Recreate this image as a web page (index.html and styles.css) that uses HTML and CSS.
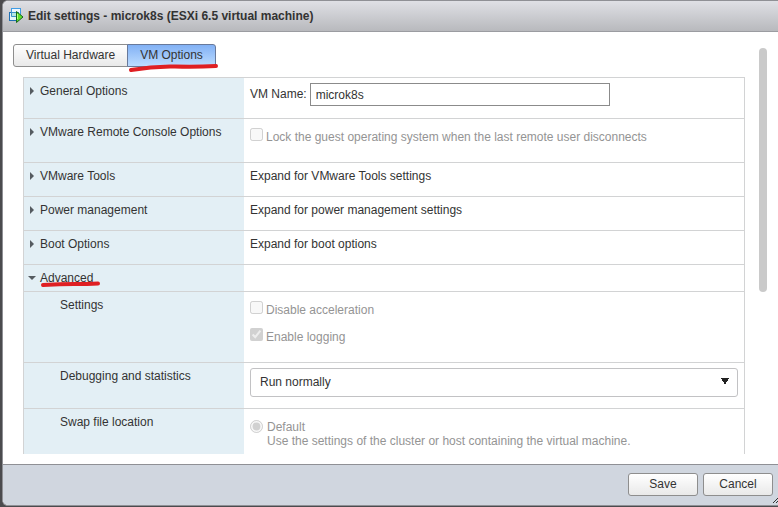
FILE: index.html
```html
<!DOCTYPE html>
<html lang="en">
<head>
<meta charset="utf-8">
<title>Edit settings - microk8s</title>
<link rel="stylesheet" href="styles.css">
</head>
<body>
<div class="dialog" role="dialog" aria-labelledby="dialog-title">
  <header class="titlebar">
    <svg class="vm-icon" width="16" height="16" viewBox="0 0 16 16" aria-hidden="true">
      <rect x="3.500" y="0.500" width="9" height="8" fill="#eef6ff" stroke="#3f9ce4"/>
      <rect x="1.500" y="4.500" width="9" height="8" fill="#e4f6fa" stroke="#2070b4"/>
      <path d="M3.500 4.500h7v4h-7z" fill="#b5e6e4" stroke="#3a94c8"/>
      <path d="M8.500 3.500v11L15 9z" fill="#5fe02c" stroke="#17651b" stroke-linejoin="round"/>
      <path d="M9.500 6v5" stroke="#bafc8c"/>
    </svg>
    <h1 id="dialog-title">Edit settings - microk8s (ESXi 6.5 virtual machine)</h1>
  </header>

  <main class="body">
    <div class="content">
      <div class="tabs" role="tablist">
        <button class="tab" type="button" role="tab" aria-selected="false">Virtual Hardware</button>
        <button class="tab tab-active" type="button" role="tab" aria-selected="true">VM Options
          <svg class="mark mark-tab" width="90" height="8" viewBox="0 0 90 8" aria-hidden="true"><path d="M2 6Q24 2 46 2.500T87 2" fill="none" stroke="#df1f23" stroke-width="4" stroke-linecap="round"/></svg>
        </button>
      </div>

      <div class="settings">
        <section class="row row-general">
          <div class="name"><button class="expander" type="button">General Options</button></div>
          <div class="value value-field">
            <label for="vm-name">VM Name:</label>
            <input class="text-box" id="vm-name" type="text" value="microk8s">
          </div>
        </section>
        <section class="row row-console">
          <div class="name"><button class="expander" type="button">VMware Remote Console Options</button></div>
          <div class="value"><label class="choice"><input type="checkbox" disabled><span>Lock the guest operating system when the last remote user disconnects</span></label></div>
        </section>
        <section class="row">
          <div class="name"><button class="expander" type="button">VMware Tools</button></div>
          <div class="value">Expand for VMware Tools settings</div>
        </section>
        <section class="row">
          <div class="name"><button class="expander" type="button">Power management</button></div>
          <div class="value">Expand for power management settings</div>
        </section>
        <section class="row">
          <div class="name"><button class="expander" type="button">Boot Options</button></div>
          <div class="value">Expand for boot options</div>
        </section>
        <section class="row row-advanced">
          <div class="name"><button class="expander expander-open" type="button" aria-expanded="true">Advanced
            <svg class="mark mark-advanced" width="62" height="6" viewBox="0 0 62 6" aria-hidden="true"><path d="M3 4Q20 3 34 3T58 2.500" fill="none" stroke="#df1f23" stroke-width="4" stroke-linecap="round"/></svg>
          </button></div>
          <div class="value"></div>
        </section>
        <section class="row row-settings">
          <div class="name name-sub">Settings</div>
          <div class="value choices">
            <label class="choice"><input type="checkbox" disabled><span>Disable acceleration</span></label>
            <label class="choice"><input type="checkbox" checked disabled><span>Enable logging</span></label>
          </div>
        </section>
        <section class="row row-debug">
          <div class="name name-sub"><label for="debugging">Debugging and statistics</label></div>
          <div class="value value-select">
            <select class="select" id="debugging"><option>Run normally</option></select>
          </div>
        </section>
        <section class="row row-swap">
          <div class="name name-sub">Swap file location</div>
          <div class="value">
            <label class="choice choice-radio"><input type="radio" name="swap" checked disabled><span>Default<br>Use the settings of the cluster or host containing the virtual machine.</span></label>
          </div>
        </section>
      </div>
    </div>
    <div class="scroll-track"><div class="scroll-thumb"></div></div>
  </main>

  <footer class="actions">
    <button class="button" type="button">Save</button>
    <button class="button" type="button">Cancel</button>
    <svg class="grip" width="5" height="5" viewBox="0 0 5 5" aria-hidden="true"><path d="M0 5L5 0M3 5L5 3" stroke="#333" fill="none"/></svg>
  </footer>
</div>
</body>
</html>
```
FILE: styles.css
```css
* {
  box-sizing: border-box;
}

body {
  margin: 0;
  height: 100vh;
  padding: 0 0 1px 2px;
  background: #4b4b4e;
  color: #333;
  font: 12px/16px "Liberation Sans", Arial, sans-serif;
}

button,
input,
select {
  font: inherit;
  color: inherit;
}

.dialog {
  height: 100%;
  display: flex;
  flex-direction: column;
  overflow: hidden;
  background: #fff;
  border: solid #8f9095;
  border-width: 1px 0 1px 1px;
  border-radius: 6px 0 0 6px;
}

.titlebar {
  display: flex;
  align-items: center;
  flex: none;
  gap: 4px;
  height: 31px;
  padding: 0 5px;
  background: linear-gradient(#dfe0e5, #b8b9bd);
  border-bottom: 1px solid #9b9ca1;
}

h1 {
  margin: 0;
  font-size: 12px;
  line-height: 16px;
}

.body {
  display: flex;
  flex: 1;
  min-height: 0;
  padding: 12px 11px 10px 10px;
}

.content {
  display: flex;
  flex: 1;
  flex-direction: column;
  min-width: 0;
}

.tabs {
  display: flex;
  flex: none;
}

.tab {
  position: relative;
  height: 23px;
  padding: 0 12px 2px;
  border: 1px solid #8e8e8e;
  border-radius: 3px 0 0 3px;
  background: linear-gradient(#fff, #e9e9e9);
}

.tab-active {
  margin-left: -1px;
  border-radius: 0 3px 3px 0;
  border-color: #68799a;
  background: linear-gradient(#82b1f5, #bcdcff);
}

.mark {
  position: absolute;
  pointer-events: none;
}

.mark-tab {
  top: 19px;
  left: 1px;
}

.mark-advanced {
  top: 11px;
  left: 10px;
}

.settings {
  flex: 1;
  min-height: 0;
  margin: 10px 14px 0 10px;
  overflow: hidden;
  border: solid #d2d3d4;
  border-width: 1px 1px 0;
}

.row {
  display: grid;
  grid-template-columns: 220px 1fr;
  min-height: 34px;
  border-bottom: 1px solid #d2d3d4;
}

.name {
  padding: 5px 6px;
  background: #e3eff5;
}

.name-sub {
  padding-left: 36px;
}

.value {
  padding: 5px 6px;
}

.expander {
  position: relative;
  display: flex;
  align-items: center;
  gap: 6px;
  padding: 0;
  border: 0;
  background: none;
  white-space: nowrap;
}

.expander::before {
  content: "";
  border: solid transparent;
  border-width: 4px 0 4px 4px;
  border-left-color: #555b60;
}

.expander-open {
  gap: 4px;
}

.expander-open::before {
  margin-left: -2px;
  border-width: 4px 4px 0;
  border-color: #555b60 transparent transparent;
}

.row-general {
  min-height: 41px;
}

.row-console {
  min-height: 44px;
}

.row-console .value {
  padding-top: 9px;
}

.row-advanced {
  min-height: 27px;
}

.row-settings {
  min-height: 71px;
}

.row-debug,
.row-swap {
  min-height: 46px;
}

.value-field {
  display: flex;
  align-items: flex-start;
  gap: 3px;
}

.value-field label {
  padding-top: 3px;
}

.text-box {
  width: 300px;
  height: 23px;
  padding: 0 5px;
  border: 1px solid #8b8b8b;
  background: #fff;
}

.choice {
  display: flex;
  align-items: flex-start;
  gap: 3px;
  color: #949494;
}

.choice input {
  flex: none;
  width: 13px;
  height: 13px;
  margin: 0;
}

.choice span {
  padding-top: 1px;
}

.choices {
  display: flex;
  flex-direction: column;
  gap: 10px;
  padding-top: 9px;
}

.value-select {
  display: flex;
  align-items: flex-start;
}

.select {
  width: 100%;
  height: 29px;
  padding: 0 9px 2px;
  appearance: none;
  border: 1px solid #c2c2c4;
  border-radius: 3px;
  background:
    conic-gradient(from -30deg at 50% 100%, #222 60deg, transparent 0) right 8px top 9px / 8px 7px no-repeat,
    #fff;
}

.row-swap {
  border-bottom: 0;
}

.row-swap .value {
  padding-top: 11px;
}

.choice-radio {
  gap: 4px;
  line-height: 14px;
}

.choice-radio span {
  padding-top: 0;
}

.scroll-track {
  flex: none;
  width: 8px;
  padding-top: 4px;
}

.scroll-thumb {
  height: 60%;
  border-radius: 4px;
  background: #cacaca;
}

.actions {
  position: relative;
  display: flex;
  flex: none;
  justify-content: flex-end;
  gap: 5px;
  padding: 8px 5px 9px;
  border-top: 1px solid #8f9095;
  background: #d0d6df;
}

.button {
  width: 70px;
  height: 23px;
  padding: 0 0 2px;
  border: 1px solid #8e8e8e;
  border-radius: 3px;
  background: linear-gradient(#fff, #e9e9e9);
}

.grip {
  position: absolute;
  right: 0;
  bottom: 2px;
}
```
